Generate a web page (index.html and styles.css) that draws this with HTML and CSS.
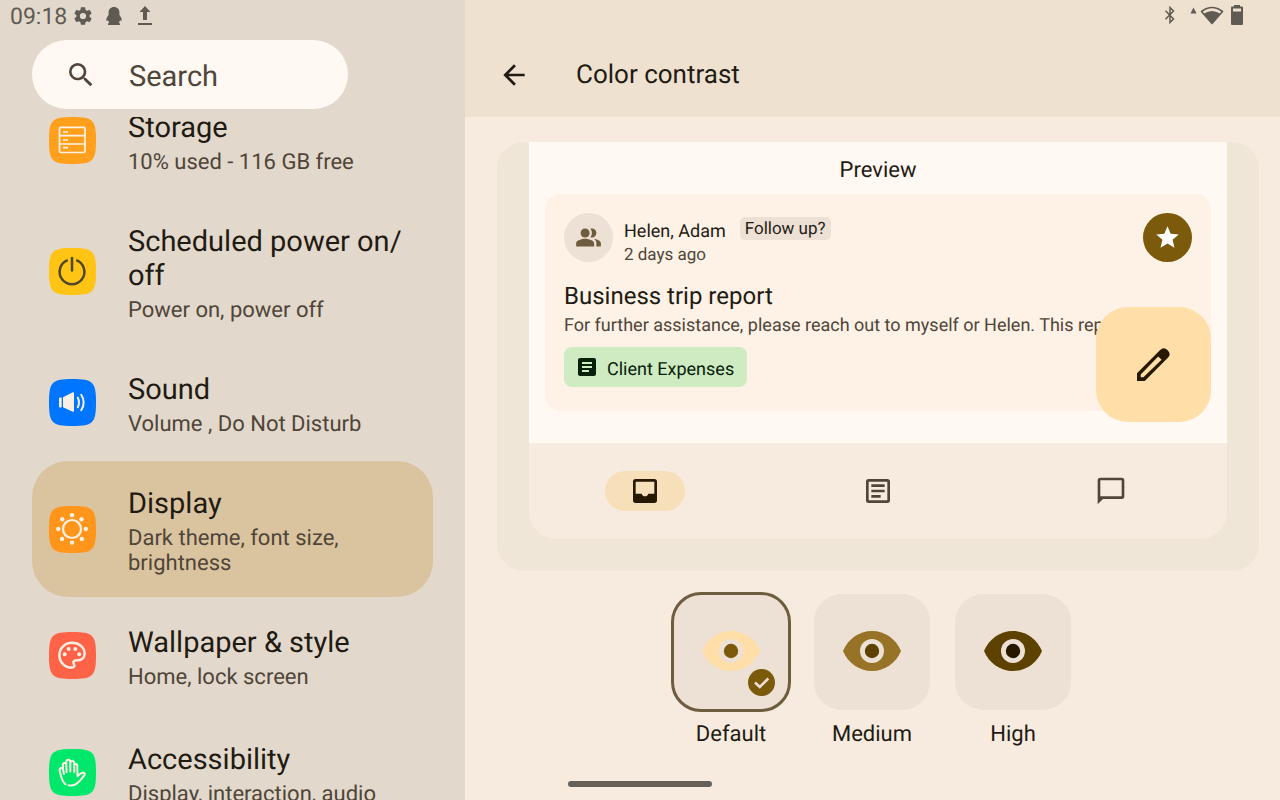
FILE: index.html
```html
<!DOCTYPE html>
<html lang="en">
<head>
<meta charset="utf-8">
<meta name="viewport" content="width=device-width, initial-scale=1">
<title>Color contrast</title>
<link rel="stylesheet" href="styles.css">
</head>
<body>
<svg class="defs" aria-hidden="true">
  <symbol id="squircle" viewBox="0 0 48 48"><path d="M0 24C0 3 3 0 24 0S48 3 48 24 45 48 24 48 0 45 0 24Z"/></symbol>
  <symbol id="eye" viewBox="0 0 58 40">
    <path d="M0 20C5 8 16 0 29 0S53 8 58 20C53 32 42 40 29 40S5 32 0 20Z"/>
    <circle cx="29" cy="20" r="12" fill="#ede0d4"/>
  </symbol>
</svg>
<div class="screen">
  <aside class="sidebar">
    <div class="status">
      <span class="clock">09:18</span>
      <svg class="status-gear" viewBox="0 0 24 24"><path d="M19.14 12.94c.04-.3.06-.61.06-.94 0-.32-.02-.64-.07-.94l2.03-1.58a.49.49 0 0 0 .12-.61l-1.92-3.32a.49.49 0 0 0-.59-.22l-2.39.96c-.5-.38-1.03-.7-1.62-.94l-.36-2.54a.48.48 0 0 0-.48-.41h-3.84c-.24 0-.43.17-.47.41l-.36 2.54c-.59.24-1.13.57-1.62.94l-2.39-.96a.48.48 0 0 0-.59.22L2.74 8.87c-.12.21-.08.47.12.61l2.03 1.58c-.05.3-.09.63-.09.94s.02.64.07.94l-2.03 1.58a.49.49 0 0 0-.12.61l1.92 3.32c.12.22.37.29.59.22l2.39-.96c.5.38 1.03.7 1.62.94l.36 2.54c.05.24.24.41.48.41h3.84c.24 0 .44-.17.47-.41l.36-2.54c.59-.24 1.13-.56 1.62-.94l2.39.96c.22.08.47 0 .59-.22l1.92-3.32a.48.48 0 0 0-.12-.61zM12 15.4a3.4 3.4 0 1 1 0-6.8 3.4 3.4 0 0 1 0 6.8z"/></svg>
      <svg class="status-qq" viewBox="0 0 16 18"><path d="M8 0C4.700 0 2.600 2.400 2.600 5.400V8C1.600 9.300.4 11 .3 13c0 1.200.6 1.300 1.600.2.300.9.800 1.700 1.500 2.300-1 .3-1.500.9-1.300 2.500h11.800c.2-1.600-.3-2.200-1.300-2.500.7-.6 1.200-1.400 1.500-2.300 1 1.100 1.600 1 1.600-.2-.1-2-1.300-3.700-2.300-5V5.400C13.400 2.400 11.300 0 8 0z"/></svg>
      <svg class="status-upload" viewBox="0 0 16 20"><path d="M8 0l5.500 6H10v8H6V6H2.500zM1 17h14v2H1z"/></svg>
    </div>
    <label class="search">
      <svg viewBox="0 0 24 24" aria-hidden="true"><path d="M15.500 14h-.79l-.28-.27A6.470 6.470 0 0 0 16 9.500 6.500 6.500 0 1 0 9.500 16c1.610 0 3.090-.59 4.230-1.570l.27.28v.79l5 4.990L20.490 19l-4.990-5zm-6 0C7.010 14 5 11.990 5 9.500S7.010 5 9.500 5 14 7.010 14 9.500 11.990 14 9.500 14z"/></svg>
      <input type="text" placeholder="Search" aria-label="Search">
    </label>
    <nav class="list-view" aria-label="Settings">
      <ul class="list">
        <li><a class="item" href="#storage">
          <svg class="badge" viewBox="0 0 47 47"><use href="#squircle" fill="#ffa01c"/><g fill="none" stroke="#fff1e4" stroke-width="1.700"><rect x="10.500" y="10.300" width="25.500" height="25.200" rx="1.500"/><path d="M10.500 18.700H36M10.500 27H36M14 15h5M14 23h5M14 30.700h5"/></g></svg>
          <span class="item-text"><span class="item-title">Storage</span><span class="item-sub">10% used - 116 GB free</span></span>
        </a></li>
        <li><a class="item" href="#power">
          <svg class="badge" viewBox="0 0 47 47"><use href="#squircle" fill="#ffc414"/><g fill="none" stroke="#52452f" stroke-width="2.500"><path d="M18.700 12.200A12.400 12.400 0 1 0 27.300 12.200"/><path d="M23 10V22.500" stroke-linecap="round"/></g></svg>
          <span class="item-text"><span class="item-title">Scheduled power on/<wbr>off</span><span class="item-sub">Power on, power off</span></span>
        </a></li>
        <li><a class="item" href="#sound">
          <svg class="badge" viewBox="0 0 47 47"><use href="#squircle" fill="#0075ff"/><g fill="#fbeee2"><rect x="10" y="18.500" width="2.700" height="10" rx=".8"/><path d="M14 18.200L23.800 13.300Q25 13 25 14V32q0 1-1.200.7L14 28.200z"/></g><g fill="none" stroke="#fbeee2" stroke-width="2" stroke-linecap="round"><path d="M28.800 18.600q2.400 4.800 0 9.600M32.200 15.800q5 7.500 0 15.400"/></g></svg>
          <span class="item-text"><span class="item-title">Sound</span><span class="item-sub">Volume , Do Not Disturb</span></span>
        </a></li>
        <li><a class="item selected" href="#display" aria-current="page">
          <svg class="badge" viewBox="0 0 47 47"><use href="#squircle" fill="#ff951a"/><circle cx="23" cy="23" r="9" fill="none" stroke="#fff1e4" stroke-width="2.200"/><g fill="#fff1e4"><circle cx="23" cy="9.200" r="2.200"/><circle cx="32.500" cy="13.200" r="2.200"/><circle cx="36.800" cy="23" r="2.200"/><circle cx="32.800" cy="33" r="2.200"/><circle cx="23" cy="36.600" r="2.200"/><circle cx="13" cy="33" r="2.200"/><circle cx="9.300" cy="23" r="2.200"/><circle cx="13.200" cy="13.200" r="2.200"/></g></svg>
          <span class="item-text"><span class="item-title">Display</span><span class="item-sub">Dark theme, font size, brightness</span></span>
        </a></li>
        <li><a class="item" href="#wallpaper">
          <svg class="badge" viewBox="0 0 47 47"><use href="#squircle" fill="#ff6347"/><path fill="none" stroke="#fbeee2" stroke-width="2.500" d="M23 10.800c7.300 0 12.600 4.600 12.600 10.700 0 4-2.800 6.600-6.400 6.700l-2.800.2c-2 .3-2.600 1.900-1.500 3.700 1 1.800.2 3.500-2 3.500-7 0-12.500-5.400-12.500-12.400S16 10.800 23 10.800z"/><g fill="#fbeee2"><circle cx="15.700" cy="22.300" r="2"/><circle cx="19.600" cy="17" r="2"/><circle cx="26.300" cy="17" r="2"/><circle cx="30.200" cy="22.300" r="2"/></g></svg>
          <span class="item-text"><span class="item-title">Wallpaper &amp; style</span><span class="item-sub">Home, lock screen</span></span>
        </a></li>
        <li class="group-start"><a class="item" href="#accessibility">
          <svg class="badge" viewBox="0 0 47 47"><use href="#squircle" fill="#00e86b"/><g fill="none" stroke="#fff1e4" stroke-width="2" stroke-linecap="round" stroke-linejoin="round"><path d="M16.500 35.300C12.600 32.500 11.800 26.500 10.600 21.300 10.200 19 13.200 18 13.900 20L15 25M13.900 20.500V15.800c0-2.300 3.300-2.400 3.400 0L17.600 23.300M17.300 15V12.800c.2-2.800 3.800-2.800 4 0V22.600M21.300 13.500c.7-2.300 4-1.700 4 .7V23M25.300 16c.8-1.600 3-1.200 3 .8L28.500 27.200c2-2 4-3.800 6-3.400 1.700.4 1.700 1.500.7 2.700C32 30.500 29 35.500 24 36.300 22.200 36.600 20.800 36.500 19.500 36.300"/></g></svg>
          <span class="item-text"><span class="item-title">Accessibility</span><span class="item-sub">Display, interaction, audio</span></span>
        </a></li>
      </ul>
    </nav>
  </aside>

  <main class="detail">
    <header class="topbar">
      <div class="status status-end">
        <svg class="status-bt" viewBox="0 0 12 18"><path d="M1.500 4.800L9.500 13 6 16.500v-15L9.500 5 1.500 13.200" fill="none" stroke="#5f5b53" stroke-width="1.500"/></svg>
        <svg class="status-wifi" viewBox="0 0 34 20"><path d="M3.500 2.500L6.500 8.500H.5z"/><path d="M11.500 6.500Q22-1.500 32.500 6.500L22 18.500z" fill="none" stroke="#5f5b53" stroke-width="1.600" stroke-linejoin="round"/><path d="M14 8.500Q22 3.500 30 8.500L22 18.500z"/></svg>
        <svg class="status-battery" viewBox="0 0 12 20"><path fill-rule="evenodd" d="M3 0h6v1.500h2q1 0 1 1V19q0 1-1 1H1q-1 0-1-1V2.500q0-1 1-1h2zM2 3.500V6.500h8v-3z"/></svg>
      </div>
      <div class="toolbar">
        <button class="back" type="button" aria-label="Back"><svg viewBox="0 0 24 24"><path d="M20 11H7.830l5.590-5.590L12 4l-8 8 8 8 1.410-1.410L7.830 13H20v-2z"/></svg></button>
        <h1>Color contrast</h1>
      </div>
    </header>

    <div class="content">
      <section class="preview">
        <div class="preview-body">
          <h2>Preview</h2>
          <article class="mail">
            <div class="mail-head">
              <span class="avatar"><svg viewBox="0 0 24 24"><circle cx="9" cy="8" r="4"/><path d="M16.670 13.130C18.040 14.060 19 15.320 19 17v3h4v-3c0-2.180-3.570-3.470-6.330-3.870zM15 12c2.210 0 4-1.790 4-4s-1.790-4-4-4c-.47 0-.91.1-1.330.24C14.500 5.270 15 6.580 15 8s-.5 2.730-1.330 3.760c.42.140.86.240 1.330.240zM9 13c-2.670 0-8 1.340-8 4v3h16v-3c0-2.660-5.330-4-8-4z"/></svg></span>
              <div class="sender"><span class="sender-name">Helen, Adam</span><span class="sender-date">2 days ago</span></div>
              <span class="tag">Follow up?</span>
              <button class="star" type="button" aria-label="Star"><svg viewBox="0 0 24 24"><path d="M12 17.270L18.180 21l-1.640-7.030L22 9.240l-7.190-.61L12 2 9.190 8.630 2 9.240l5.460 4.730L5.820 21z"/></svg></button>
            </div>
            <h3>Business trip report</h3>
            <p class="excerpt">For further assistance, please reach out to myself or Helen. This report</p>
            <button class="chip" type="button"><svg viewBox="0 0 24 24"><path d="M19 3H5c-1.100 0-2 .9-2 2v14c0 1.100.9 2 2 2h14c1.100 0 2-.9 2-2V5c0-1.100-.9-2-2-2zm-5 14H7v-2h7v2zm3-4H7v-2h10v2zm0-4H7V7h10v2z"/></svg><span>Client Expenses</span></button>
          </article>
          <button class="fab" type="button" aria-label="Edit"><svg viewBox="0 0 98 98"><path fill-rule="evenodd" d="M0 98V75L68 7Q79-5 91 7T91 30L23 98ZM11 87H19L73 35 63 25 11 79Z"/></svg></button>
        </div>
        <div class="tabs">
          <button class="tab active" type="button" aria-label="Inbox"><svg viewBox="0 0 24 24"><path fill-rule="evenodd" d="M5 3H19Q21 3 21 5V19Q21 21 19 21H5Q3 21 3 19V5Q3 3 5 3ZM5 5V14H9.500C10 15.500 10.800 16 12 16S14 15.500 14.500 14H19V5Z"/></svg></button>
          <button class="tab" type="button" aria-label="Articles"><svg viewBox="0 0 24 24"><path fill-rule="evenodd" d="M5 3H19Q21 3 21 5V19Q21 21 19 21H5Q3 21 3 19V5Q3 3 5 3ZM5 5V19H19V5ZM7 7H17V9H7ZM7 11H17V13H7ZM7 15H14V17H7Z"/></svg></button>
          <button class="tab" type="button" aria-label="Messages"><svg viewBox="0 0 24 24"><path fill-rule="evenodd" d="M4 2H20Q22 2 22 4V16Q22 18 20 18H6L2 22V4Q2 2 4 2ZM4 4V16H20V4Z"/></svg></button>
        </div>
      </section>

      <div class="options" role="radiogroup" aria-label="Color contrast">
        <label class="option">
          <input type="radio" name="contrast" checked>
          <span class="tile"><svg class="eye" viewBox="0 0 58 40"><use href="#eye" fill="#ffdea8"/><circle cx="29" cy="20" r="7.200" fill="#7b5a0c"/></svg><svg class="check" viewBox="0 0 27 27"><circle cx="13.500" cy="13.500" r="13.500" fill="#7b5a0c"/><path d="M7 13.500L11.800 18 20.300 9.500" fill="none" stroke="#ede0d4" stroke-width="2.500"/></svg></span>
          <span class="option-name">Default</span>
        </label>
        <label class="option">
          <input type="radio" name="contrast">
          <span class="tile"><svg class="eye" viewBox="0 0 58 40"><use href="#eye" fill="#977328"/><circle cx="29" cy="20" r="7.200" fill="#5c4100"/></svg></span>
          <span class="option-name">Medium</span>
        </label>
        <label class="option">
          <input type="radio" name="contrast">
          <span class="tile"><svg class="eye" viewBox="0 0 58 40"><use href="#eye" fill="#5c4100"/><circle cx="29" cy="20" r="7.200" fill="#271900"/></svg></span>
          <span class="option-name">High</span>
        </label>
      </div>
    </div>
  </main>
  <div class="home-bar"></div>
</div>
</body>
</html>
```

FILE: styles.css
```css
* { box-sizing: border-box; }

body {
  margin: 0;
  font-family: Roboto, "Liberation Sans", sans-serif;
  text-rendering: geometricPrecision;
  color: #1f1b13;
}

h1, h2, h3, p, ul { margin: 0; padding: 0; font-weight: 400; }

button {
  border: 0;
  padding: 0;
  background: none;
  font: inherit;
  text-rendering: inherit;
  color: inherit;
}

svg { display: block; flex: none; fill: currentColor; }

.defs { position: absolute; width: 0; height: 0; }

.screen {
  position: relative;
  display: grid;
  grid-template-columns: 465px 1fr;
  height: 100vh;
  overflow: hidden;
}

/* Status bar */
.status {
  display: flex;
  align-items: center;
  height: 32px;
  padding-left: 10px;
  color: #5f5b53;
}
.clock { width: 62px; padding-top: 1px; font-size: 23px; line-height: 31px; }
.status-gear { width: 22px; height: 22px; }
.status-qq { width: 16px; height: 18px; margin-left: 12px; }
.status-upload { width: 16px; height: 20px; margin-left: 15px; }
.status-end { justify-content: flex-end; height: 30px; padding-right: 37px; }
.status-bt { width: 12px; height: 18px; }
.status-wifi { width: 34px; height: 20px; margin-left: 14px; }
.status-battery { width: 12px; height: 20px; margin-left: 7px; }

/* Settings list */
.sidebar {
  display: flex;
  flex-direction: column;
  min-height: 0;
  background: #e2d8cb;
}
.search {
  display: flex;
  align-items: center;
  gap: 32px;
  flex: none;
  width: 316px;
  height: 69px;
  margin: 8px 32px;
  padding: 0 33px;
  border-radius: 35px;
  background: #fff8f3;
  color: #4f4538;
}
.search svg { width: 32px; height: 32px; }
.search input {
  width: 100%;
  min-width: 0;
  border: 0;
  padding: 4px 0 0;
  outline: 0;
  background: none;
  font: inherit;
  font-size: 29px;
  text-rendering: inherit;
  color: inherit;
}
.search input::placeholder { color: #4f4538; opacity: 1; }

.list-view { flex: 1; min-height: 0; overflow: hidden; }
.list {
  display: flex;
  flex-direction: column;
  gap: 3px;
  margin: -32px 32px 0;
  list-style: none;
}
.group-start { margin-top: 3px; }
.item {
  display: flex;
  align-items: center;
  gap: 32px;
  padding: 0 17px;
  border-radius: 36px;
  color: inherit;
  text-decoration: none;
}
.item.selected { background: #dac49f; }
.badge { width: 47px; height: 47px; }
.item-text {
  display: flex;
  flex-direction: column;
  gap: 5px;
  padding: 26px 0 21px;
}
.item-title { font-size: 29px; line-height: 34px; }
.item-sub { font-size: 22px; line-height: 25px; color: #4f4538; }

/* Detail pane */
.detail {
  display: flex;
  flex-direction: column;
  min-width: 0;
  background: #f7ebdf;
}
.topbar { background: #eee1d0; }
.toolbar {
  display: flex;
  align-items: center;
  gap: 46px;
  height: 87px;
  padding: 3px 33px 0;
}
.back svg { width: 32px; height: 32px; }
.toolbar h1 { font-size: 26px; line-height: 32px; }

.content { padding-top: 25px; }
.preview {
  margin: 0 21px 0 32px;
  padding: 0 32px 32px;
  border-radius: 27px;
  background: #f0e6d7;
}
.preview-body {
  position: relative;
  padding: 16px 16px 32px;
  background: #fff8f3;
}
.preview h2 {
  margin-bottom: 10px;
  font-size: 22px;
  line-height: 26px;
  text-align: center;
}
.mail {
  padding: 19px 19px 24px;
  border-radius: 16px;
  background: #fef1e5;
}
.mail-head { display: flex; align-items: flex-start; height: 53px; }
.avatar, .star {
  display: flex;
  align-items: center;
  justify-content: center;
  width: 49px;
  height: 49px;
  border-radius: 50%;
}
.avatar { background: #ede0d4; color: #6e5c3f; }
.avatar svg, .star svg { width: 27px; height: 27px; }
.star { margin-left: auto; background: #7b5a0c; color: #fff; }
.sender {
  display: flex;
  flex-direction: column;
  gap: 1px;
  padding: 7px 14px 0 11px;
  font-size: 18px;
  line-height: 23px;
}
.sender-date { font-size: 17px; color: #4f4538; }
.tag {
  margin-top: 4px;
  padding: 2px 5px 0;
  border-radius: 5px;
  background: #ede0d4;
  font-size: 17px;
  line-height: 21px;
}
.mail h3 { margin-top: 14px; font-size: 24px; line-height: 32px; }
.excerpt {
  overflow: hidden;
  padding-top: 2px;
  font-size: 18px;
  line-height: 23px;
  white-space: nowrap;
  color: #4f4538;
}
.chip {
  display: flex;
  align-items: center;
  gap: 8px;
  height: 40px;
  margin-top: 10px;
  padding: 0 13px 0 11px;
  border-radius: 8px;
  background: #cfebc2;
  color: #07200a;
  font-size: 18px;
}
.chip span { padding-top: 4px; }
.chip svg { width: 24px; height: 24px; }
.fab {
  position: absolute;
  right: 16px;
  bottom: 21px;
  display: flex;
  align-items: center;
  justify-content: center;
  width: 115px;
  height: 115px;
  border-radius: 32px;
  background: #ffdea8;
  color: #271900;
}
.fab svg { width: 33px; height: 33px; }

.tabs {
  display: grid;
  grid-template-columns: repeat(3, 1fr);
  justify-items: center;
  align-items: center;
  height: 96px;
  border-radius: 0 0 27px 27px;
  background: #f7ebdf;
}
.tab {
  display: flex;
  align-items: center;
  justify-content: center;
  width: 80px;
  height: 40px;
  border-radius: 20px;
  color: #4f4538;
}
.tab.active { background: #f7dfba; color: #271900; }
.tab svg { width: 32px; height: 32px; }

/* Contrast choices */
.options {
  display: flex;
  justify-content: center;
  gap: 25px;
  margin-top: 23px;
  padding-right: 1px;
}
.option {
  position: relative;
  display: flex;
  flex-direction: column;
  align-items: center;
  gap: 12px;
  width: 116px;
}
.option input { position: absolute; opacity: 0; margin: 0; }
.tile {
  position: relative;
  display: flex;
  align-items: center;
  justify-content: center;
  width: 100%;
  height: 116px;
  padding-bottom: 2px;
  border-radius: 28px;
  background: #ede0d4;
}
.option input:checked + .tile { outline: 3px solid #6e5c3f; outline-offset: -1px; }
.eye { width: 58px; height: 40px; }
.check { position: absolute; right: 14px; bottom: 14px; width: 27px; height: 27px; }
.option-name { font-size: 22px; line-height: 26px; }

.home-bar {
  position: absolute;
  bottom: 13px;
  left: 50%;
  width: 144px;
  height: 6px;
  margin-left: -72px;
  border-radius: 3px;
  background: #65615a;
}
```
